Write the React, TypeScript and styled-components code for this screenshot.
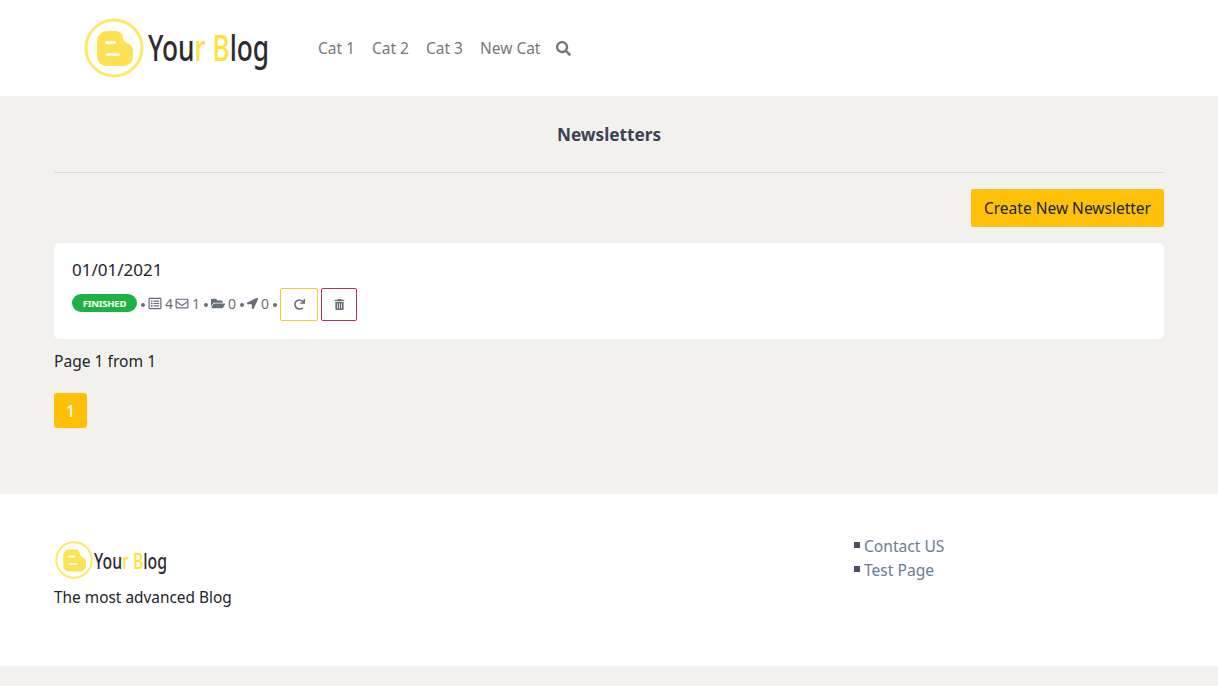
import styled, { createGlobalStyle } from "styled-components";
import { FaSearch, FaRegEnvelope, FaFolderOpen, FaLocationArrow, FaRedo, FaTrashAlt, FaRegListAlt } from "react-icons/fa";

const GlobalStyle = createGlobalStyle`
    html, body {
        margin: 0;
        padding: 0;
        background: #f3f1ed;
        font-family: "Noto Sans", "Open Sans", sans-serif;
        color: #212529;
    }
`;

const Header = styled.header`
    height: 96px;
    background: #fff;
    display: flex;
    align-items: center;
    padding-left: 84px;
`;

const Nav = styled.nav`
    display: flex;
    align-items: center;
    gap: 17px;
    margin-left: 49px;
    color: #777;
    font-size: 15.5px;
`;

const SearchIcon = styled(FaSearch)`
    width: 15px;
    height: 15px;
    margin-left: -1px;
`;

const LogoWrap = styled.div<{ $small?: boolean }>`
    display: flex;
    align-items: center;
    gap: ${p => (p.$small ? "1px" : "4px")};
    margin-left: ${p => (p.$small ? "1px" : "0")};
`;

const LogoText = styled.span<{ $small?: boolean }>`
    display: block;
    width: ${p => (p.$small ? "73px" : "121px")};
    font-size: ${p => (p.$small ? "22px" : "36px")};
    font-weight: 500;
    line-height: 1;
    white-space: nowrap;
    color: #2c2c2c;
    transform: scaleX(${p => (p.$small ? 0.72 : 0.73)});
    transform-origin: left center;
    b {
        font-weight: 500;
        color: #fee13a;
    }
`;

const Main = styled.main`
    padding: 0 54px;
    height: 398px;
`;

const Title = styled.h1`
    margin: 0;
    height: 76px;
    display: flex;
    align-items: center;
    justify-content: center;
    font-size: 17.2px;
    font-weight: 700;
    color: #3a4256;
    border-bottom: 1px solid #dcdad6;
`;

const Actions = styled.div`
    display: flex;
    justify-content: flex-end;
    margin: 16px 0;
`;

const CreateButton = styled.button`
    height: 38px;
    width: 193px;
    padding: 0;
    border: 0;
    border-radius: 2px;
    background: #ffc107;
    font: inherit;
    font-size: 15.5px;
    color: #212529;
`;

const Card = styled.section`
    background: #fff;
    border-radius: 5px;
    height: 96px;
    box-sizing: border-box;
    padding: 16px 18px;
`;

const CardDate = styled.div`
    font-size: 17px;
    line-height: 22px;
    margin-bottom: 7px;
`;

const Meta = styled.div`
    display: flex;
    align-items: center;
    font-size: 14px;
    color: #666e7a;
    height: 33px;
`;

const Badge = styled.span`
    width: 65px;
    height: 18px;
    margin-bottom: 3px;
    border-radius: 9px;
    background: #1fb141;
    color: #fff;
    font-size: 9.5px;
    font-weight: 700;
    letter-spacing: -0.2px;
    display: flex;
    align-items: center;
    justify-content: center;
`;

const Dot = styled.span`
    width: 4px;
    height: 4px;
    border-radius: 50%;
    background: #666e7a;
    margin: 1px 3px 0 4px;
`;

const Stat = styled.span<{ $spaced?: boolean }>`
    display: inline-flex;
    align-items: center;
    gap: 3px;
    line-height: 1;
    margin-bottom: 2px;
    margin-left: ${p => (p.$spaced ? "2px" : "0")};
    svg {
        width: 14px;
        height: 13px;
    }
`;

const ArrowStat = styled(Stat)`
    svg {
        width: 11px;
        height: 11px;
    }
`;

const IconButton = styled.button<{ $color: string; $width: number }>`
    width: ${p => p.$width}px;
    height: 33px;
    padding: 0;
    background: #fff;
    border: 1px solid ${p => p.$color};
    border-radius: 2px;
    color: #666e7a;
    display: flex;
    align-items: center;
    justify-content: center;
    margin-right: 3px;
    svg {
        width: 11px;
        height: 11px;
    }
`;

const PageInfo = styled.p`
    margin: 12px 0 0;
    font-size: 15.6px;
    line-height: 20px;
`;

const PageButton = styled.button`
    display: block;
    margin-top: 22px;
    width: 33px;
    height: 35px;
    padding: 0;
    border: 0;
    border-radius: 3px;
    background: #ffc107;
    color: #fff;
    font: inherit;
    font-size: 16px;
    font-weight: 500;
`;

const Footer = styled.footer`
    height: 172px;
    background: #fff;
    box-sizing: border-box;
    padding: 47px 54px 0;
    display: flex;
`;

const FooterLeft = styled.div`
    width: 800px;
`;

const Tagline = styled.p`
    margin: 9px 0 0;
    font-size: 15.4px;
    line-height: 20px;
`;

const Links = styled.ul`
    list-style: none;
    margin: -7px 0 0;
    padding: 0;
`;

const LinkItem = styled.li`
    display: flex;
    align-items: center;
    gap: 4px;
    height: 24px;
    font-size: 15.6px;
    color: #6b7c93;
    &::before {
        content: "";
        width: 6px;
        height: 6px;
        background: #4a5262;
        margin-top: -2px;
    }
`;

const Bottom = styled.div`
    height: 20px;
`;

const Logo = ({ small }: { small?: boolean }) => {
    const size = small ? 38 : 60;
    return (
        <LogoWrap $small={small}>
            <svg width={size} height={size} viewBox="0 0 60 60">
                <circle cx="30" cy="30" r="28" fill="#fff" stroke="#fde968" strokeWidth="3" />
                <path fillRule="evenodd" fill="#fee253" d="M13 23a10 10 0 0 1 10-10h9a8 8 0 0 1 7 6c.5 4 2 5 5 6.5 3 1.500 5 4 5 7.500v6a9 9 0 0 1-9 9H22a9 9 0 0 1-9-9z M22.500 23a1.500 1.500 0 0 0 0 3h8a1.500 1.500 0 0 0 0-3z M23.500 35a1.500 1.500 0 0 0 0 3h11a1.500 1.500 0 0 0 0-3z" />
            </svg>
            <LogoText $small={small}>You<b>r B</b>log</LogoText>
        </LogoWrap>
    );
};

export default function App() {
    return (
        <>
            <GlobalStyle />
            <Header>
                <Logo />
                <Nav>
                    <span>Cat 1</span>
                    <span>Cat 2</span>
                    <span>Cat 3</span>
                    <span>New Cat</span>
                    <SearchIcon />
                </Nav>
            </Header>
            <Main>
                <Title>Newsletters</Title>
                <Actions>
                    <CreateButton>Create New Newsletter</CreateButton>
                </Actions>
                <Card>
                    <CardDate>01/01/2021</CardDate>
                    <Meta>
                        <Badge>FINISHED</Badge>
                        <Dot />
                        <Stat><FaRegListAlt /> 4</Stat>
                        <Stat $spaced><FaRegEnvelope /> 1</Stat>
                        <Dot />
                        <Stat><FaFolderOpen /> 0</Stat>
                        <Dot />
                        <ArrowStat><FaLocationArrow /> 0</ArrowStat>
                        <Dot />
                        <IconButton $color="#f0c93a" $width={38}><FaRedo /></IconButton>
                        <IconButton $color="#b8304a" $width={36}><FaTrashAlt /></IconButton>
                    </Meta>
                </Card>
                <PageInfo>Page 1 from 1</PageInfo>
                <PageButton>1</PageButton>
            </Main>
            <Footer>
                <FooterLeft>
                    <Logo small />
                    <Tagline>The most advanced Blog</Tagline>
                </FooterLeft>
                <Links>
                    <LinkItem>Contact US</LinkItem>
                    <LinkItem>Test Page</LinkItem>
                </Links>
            </Footer>
            <Bottom />
        </>
    );
}
